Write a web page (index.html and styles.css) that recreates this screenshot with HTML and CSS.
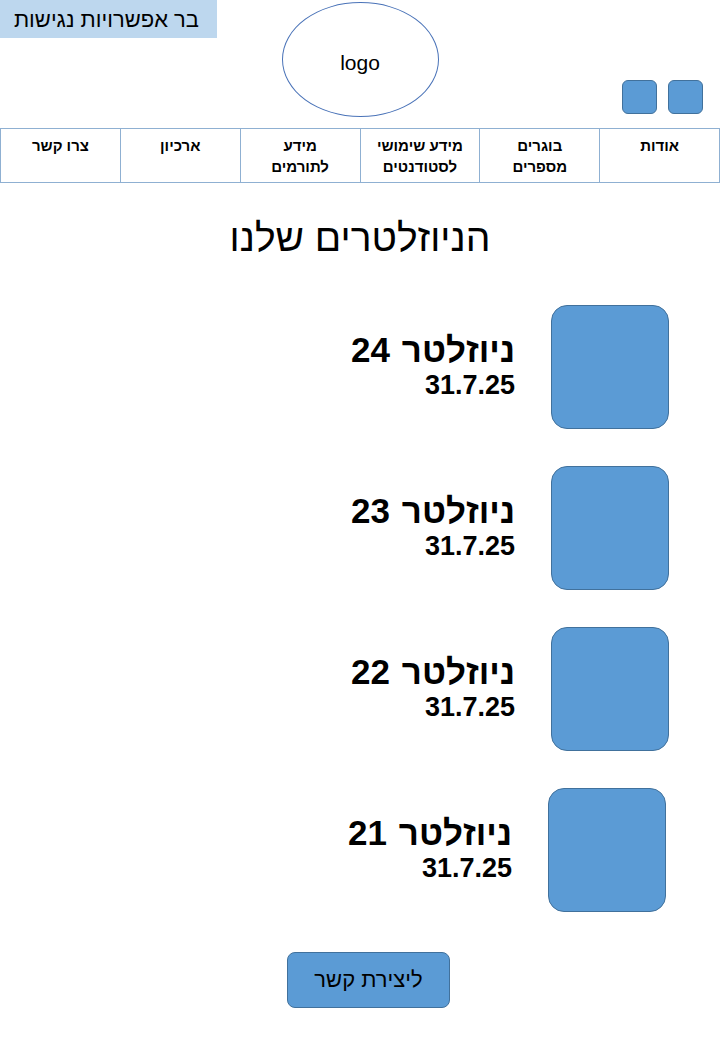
FILE: index.html
```html
<!DOCTYPE html>
<html lang="he" dir="rtl">
<head>
  <meta charset="UTF-8">
  <title>הניוזלטרים שלנו</title>
  <link rel="stylesheet" href="styles.css">
</head>
<body>
<div class="top">
  <div class="top-left">
    <div class="access">בר אפשרויות נגישות</div>
  </div>
  <div class="logo">logo</div>
  <div class="top-right">
    <span class="sq"></span>
    <span class="sq"></span>
  </div>
</div>

<ul class="nav">
  <li>אודות</li>
  <li>בוגרים<br>מספרים</li>
  <li>מידע שימושי<br>לסטודנטים</li>
  <li>מידע<br>לתורמים</li>
  <li>ארכיון</li>
  <li>צרו קשר</li>
</ul>

<h1 class="title">הניוזלטרים שלנו</h1>

<div class="list">
  <div class="item">
    <div class="thumb"></div>
    <div class="info">
      <div class="name">ניוזלטר 24</div>
      <div class="date">31.7.25</div>
    </div>
  </div>
  <div class="item">
    <div class="thumb"></div>
    <div class="info">
      <div class="name">ניוזלטר 23</div>
      <div class="date">31.7.25</div>
    </div>
  </div>
  <div class="item">
    <div class="thumb"></div>
    <div class="info">
      <div class="name">ניוזלטר 22</div>
      <div class="date">31.7.25</div>
    </div>
  </div>
  <div class="item item-last">
    <div class="thumb"></div>
    <div class="info">
      <div class="name">ניוזלטר 21</div>
      <div class="date">31.7.25</div>
    </div>
  </div>
</div>

<div class="bottom">
  <a class="btn">ליצירת קשר</a>
</div>
</body>
</html>
```

FILE: styles.css
```css
* {
  padding: 0;
  margin: 0;
  list-style: none;
  box-sizing: border-box;
}

body {
  width: 720px;
  font-family: "Liberation Sans", Arial, sans-serif;
  color: #000;
  background: #fff;
}

.top {
  direction: ltr;
  height: 128px;
  display: grid;
  grid-template-columns: 1fr auto 1fr;
}

.top-left {
  direction: rtl;
  display: flex;
  justify-content: flex-end;
  align-items: flex-start;
}

.access {
  width: 217px;
  height: 38px;
  background: #bdd7ee;
  font-size: 22px;
  line-height: 40px;
  padding-right: 18px;
  text-align: right;
  white-space: nowrap;
}

.logo {
  width: 157px;
  height: 115px;
  margin-top: 2px;
  border: 1px solid #4a73b8;
  border-radius: 50%;
  text-align: center;
  font-size: 21px;
  padding-top: 8px;
  line-height: 104px;
}

.top-right {
  display: flex;
  justify-content: flex-end;
  align-items: flex-start;
  gap: 11px;
  padding-top: 80px;
  padding-right: 17px;
}

.sq {
  width: 35px;
  height: 34px;
  background: #5b9bd5;
  border: 1px solid #41719c;
  border-radius: 6px;
}

.nav {
  display: grid;
  grid-template-columns: repeat(6, 1fr);
  height: 55px;
  border-top: 1px solid #8fb0d2;
  border-bottom: 1px solid #8fb0d2;
  border-left: 1px solid #8fb0d2;
}

.nav li {
  border-right: 1px solid #8fb0d2;
  text-align: center;
  font-size: 15px;
  font-weight: bold;
  line-height: 21px;
  padding-top: 6px;
}

.title {
  font-size: 39px;
  font-weight: normal;
  text-align: center;
  margin-top: 33px;
  line-height: 44px;
}

.list {
  display: flex;
  flex-direction: column;
  gap: 37px;
  margin-top: 45px;
  padding-right: 51px;
}

.item {
  display: flex;
  align-items: flex-start;
  gap: 36px;
}

.item-last {
  margin-right: 3px;
}

.thumb {
  width: 118px;
  height: 124px;
  background: #5b9bd5;
  border: 1px solid #41719c;
  border-radius: 16px;
}

.info {
  padding-top: 24px;
  text-align: right;
}

.name {
  font-size: 35px;
  font-weight: bold;
  line-height: 42px;
  word-spacing: 2px;
}

.date {
  font-size: 27px;
  font-weight: bold;
  line-height: 28px;
}

.bottom {
  display: flex;
  justify-content: center;
  margin-top: 40px;
  padding-left: 17px;
}

.btn {
  width: 163px;
  height: 56px;
  background: #5b9bd5;
  border: 1px solid #41719c;
  border-radius: 8px;
  font-size: 22px;
  line-height: 54px;
  text-align: center;
}
```
